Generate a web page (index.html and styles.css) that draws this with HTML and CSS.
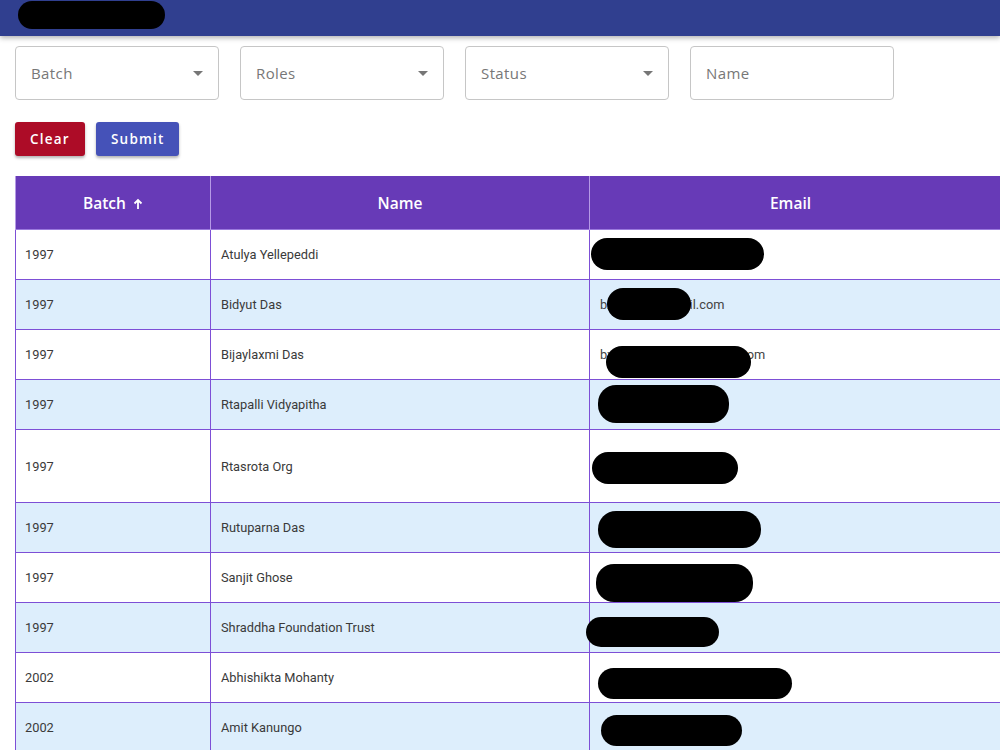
FILE: index.html
```html
<!DOCTYPE html>
<html>
<head>
<meta charset="utf-8">
<link rel="stylesheet" href="styles.css">
</head>
<body>
<header class="topbar">
  <span class="redact redact-title"></span>
</header>
<main class="content">
  <div class="filters">
    <div class="field select"><span class="label">Batch</span><span class="caret"></span></div>
    <div class="field select"><span class="label">Roles</span><span class="caret"></span></div>
    <div class="field select"><span class="label">Status</span><span class="caret"></span></div>
    <div class="field"><span class="label">Name</span></div>
  </div>
  <div class="actions">
    <button class="btn btn-clear">Clear</button>
    <button class="btn btn-submit">Submit</button>
  </div>
  <div class="table-wrap">
    <table class="grid">
      <thead>
        <tr>
          <th class="c-batch">Batch <svg class="arrow" viewBox="0 0 10 12" width="10" height="12"><path d="M5 11V2M1.5 5.5L5 2l3.5 3.5" fill="none" stroke="#fff" stroke-width="1.8"/></svg></th>
          <th class="c-name">Name</th>
          <th class="c-email">Email</th>
          <th class="c-extra"></th>
        </tr>
      </thead>
      <tbody>
        <tr><td class="batch">1997</td><td>Atulya Yellepeddi</td><td class="email"><span class="etext"></span><span class="redact r1"></span></td><td class="extra"></td></tr>
        <tr class="alt"><td class="batch">1997</td><td>Bidyut Das</td><td class="email"><span class="etext">bxxxxxxxxxxxxxil.com</span><span class="redact r2"></span></td><td class="extra"></td></tr>
        <tr><td class="batch">1997</td><td>Bijaylaxmi Das</td><td class="email"><span class="etext">bxxxxxxxxxxxxxxxxxxxxxxom</span><span class="redact r3"></span></td><td class="extra"></td></tr>
        <tr class="alt"><td class="batch">1997</td><td>Rtapalli Vidyapitha</td><td class="email"><span class="etext"></span><span class="redact r4"></span></td><td class="extra"></td></tr>
        <tr class="tall"><td class="batch">1997</td><td>Rtasrota Org</td><td class="email"><span class="etext"></span><span class="redact r5"></span></td><td class="extra"></td></tr>
        <tr class="alt"><td class="batch">1997</td><td>Rutuparna Das</td><td class="email"><span class="etext"></span><span class="redact r6"></span></td><td class="extra"></td></tr>
        <tr><td class="batch">1997</td><td>Sanjit Ghose</td><td class="email"><span class="etext">sxxxxxxxxxxxxxxxxil.com</span><span class="redact r7"></span></td><td class="extra"></td></tr>
        <tr class="alt"><td class="batch">1997</td><td>Shraddha Foundation Trust</td><td class="email"><span class="etext"></span><span class="redact r8"></span></td><td class="extra"></td></tr>
        <tr><td class="batch">2002</td><td>Abhishikta Mohanty</td><td class="email"><span class="etext"></span><span class="redact r9"></span></td><td class="extra"></td></tr>
        <tr class="alt"><td class="batch">2002</td><td>Amit Kanungo</td><td class="email"><span class="etext"></span><span class="redact r10"></span></td><td class="extra"></td></tr>
      </tbody>
    </table>
  </div>
</main>
</body>
</html>
```

FILE: styles.css
```css
html, body {
  margin: 0;
  padding: 0;
  overflow: hidden;
  background: #ffffff;
}
body {
  font-family: "Open Sans", "Noto Sans", sans-serif;
  width: 1000px;
  height: 750px;
}
.topbar {
  position: relative;
  height: 36px;
  background: #303f8f;
  box-shadow: 0 2px 5px rgba(0,0,0,0.3);
  z-index: 2;
}
.redact {
  position: absolute;
  background: #000;
  border-radius: 18px;
}
.redact-title {
  left: 18px;
  top: 1px;
  width: 147px;
  height: 28px;
  border-radius: 14px;
}
.content {
  padding: 10px 0 0 15px;
}
.filters {
  display: flex;
  gap: 21px;
}
.field {
  box-sizing: border-box;
  width: 204px;
  height: 54px;
  border: 1px solid #c6c6c6;
  border-radius: 4px;
  display: flex;
  align-items: center;
  justify-content: space-between;
  padding: 0 15px 0 15px;
}
.label {
  font-size: 15px;
  color: #777777;
  letter-spacing: 0.4px;
}
.caret {
  width: 0;
  height: 0;
  border-left: 5px solid transparent;
  border-right: 5px solid transparent;
  border-top: 5px solid #767676;
}
.actions {
  display: flex;
  gap: 11px;
  margin-top: 22px;
}
.btn {
  height: 34px;
  border: none;
  border-radius: 3px;
  color: #fff;
  font-family: "Open Sans", sans-serif;
  font-weight: 600;
  font-size: 13.5px;
  letter-spacing: 1.2px;
  padding: 0 15px;
  box-shadow: 0 2px 3px rgba(0,0,0,0.3);
}
.btn-clear {
  background: #ad0c27;
  width: 70px;
}
.btn-submit {
  background: #4552b8;
  width: 83px;
}
.table-wrap {
  margin-top: 20px;
  width: 1400px;
}
.grid {
  border-collapse: collapse;
  table-layout: fixed;
}
.grid th {
  background: #673ab7;
  color: #fff;
  font-family: "Open Sans", sans-serif;
  font-weight: 600;
  font-size: 15.5px;
  height: 53px;
  padding: 0;
  border-left: 1px solid #b59ae6;
  border-right: 1px solid #b59ae6;
}
.grid th.c-email {
  border-right-style: hidden;
}
.arrow {
  margin-left: 3px;
  vertical-align: -1px;
}
.c-batch { width: 194px; }
.c-name { width: 378px; }
.c-email { width: 401px; }
.c-extra { width: 300px; }
.grid td {
  box-sizing: border-box;
  height: 50px;
  padding: 0 0 0 10px;
  font-family: Roboto, sans-serif;
  font-size: 12.8px;
  color: #3a3a3a;
  border: 1px solid #7d4fd6;
  border-top-color: #9a79dd;
  vertical-align: middle;
}
.grid td.batch {
  padding-left: 9px;
}
.grid td.email {
  border-right-style: hidden;
}
.grid tr.alt td {
  background: #ddeefc;
}
.grid tr.tall td {
  height: 73px;
}
.email {
  position: relative;
}
.etext {
  color: #444;
}
.r1 { left: 1px; top: 8px; width: 173px; height: 32px; }
.r2 { left: 17px; top: 8px; width: 84px; height: 32px; }
.r3 { left: 16px; top: 16px; width: 145px; height: 32px; }
.r4 { left: 8px; top: 5px; width: 131px; height: 38px; }
.r5 { left: 2px; top: 22px; width: 146px; height: 32px; }
.r6 { left: 8px; top: 8px; width: 163px; height: 37px; }
.r7 { left: 6px; top: 11px; width: 157px; height: 38px; }
.r8 { left: -4px; top: 14px; width: 133px; height: 30px; }
.r9 { left: 8px; top: 15px; width: 194px; height: 31px; }
.r10 { left: 11px; top: 12px; width: 141px; height: 31px; }
```
